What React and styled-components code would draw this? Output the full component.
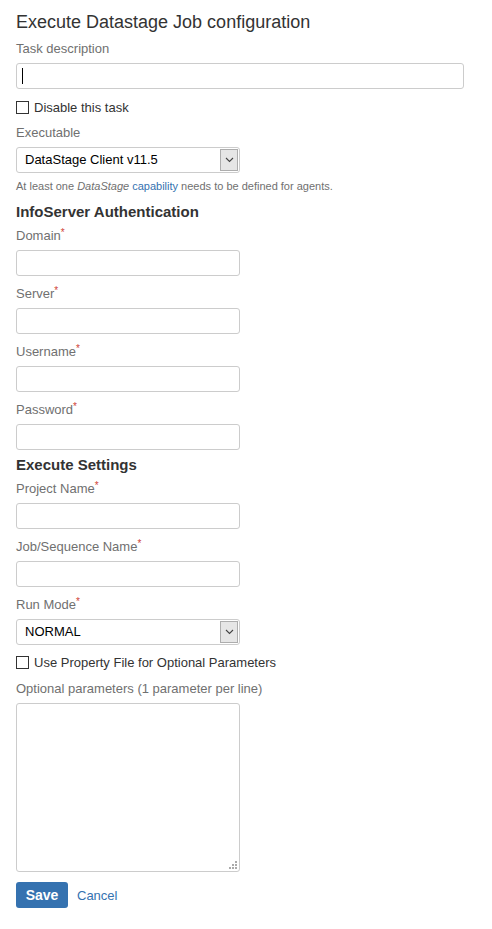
import React from "react";
import styled, { createGlobalStyle } from "styled-components";

const Global = createGlobalStyle`
  html, body { margin: 0; padding: 0; background: #fff; }
  body { font-family: "Liberation Sans", Arial, sans-serif; color: #333; }
  * { box-sizing: border-box; }
`;

const Page = styled.form`
  padding: 10px 16px 20px 16px;
  display: flex;
  flex-direction: column;
  width: 492px;
`;

const Title = styled.h2`
  margin: 0;
  font-size: 18px;
  font-weight: normal;
  line-height: 24px;
  color: #333;
`;

const SectionTitle = styled.h3`
  margin: ${(p) => p.$mt || 0}px 0 0 0;
  font-size: 15px;
  font-weight: bold;
  line-height: 20px;
  color: #333;
`;

const Field = styled.div`
  display: flex;
  flex-direction: column;
  gap: 4px;
  margin-top: ${(p) => p.$mt || 0}px;
`;

const Label = styled.label`
  font-size: 13px;
  line-height: 20px;
  color: #707070;
`;

const Req = styled.span`
  color: #d04437;
  font-size: 10px;
  vertical-align: top;
  line-height: 14px;
`;

const InputWrap = styled.div`
  position: relative;
  width: ${(p) => (p.$wide ? "448px" : "224px")};
`;

const TextInput = styled.input`
  display: block;
  width: 100%;
  height: 26px;
  border: 1px solid #ccc;
  border-radius: 3px;
  padding: 3px 6px;
  font-family: inherit;
  font-size: 13px;
  color: #333;
  outline: none;
  background: #fff;
`;

const Caret = styled.span`
  position: absolute;
  left: 6px;
  top: 5px;
  width: 1px;
  height: 16px;
  background: #000;
`;

const SelectBox = styled.div`
  width: 224px;
  height: 26px;
  border: 1px solid #ccc;
  border-radius: 3px;
  display: flex;
  align-items: stretch;
  background: #fff;
`;

const SelectValue = styled.div`
  flex: 1;
  padding-left: 8px;
  font-size: 13px;
  line-height: 24px;
  color: #000;
`;

const SelectArrow = styled.div`
  width: 18px;
  margin: 1px 1px 1px 0;
  background: #e6e6e6;
  border: 1px solid #adadad;
  display: flex;
  align-items: center;
  justify-content: center;
`;

const CheckRow = styled.label`
  display: flex;
  align-items: center;
  gap: 5px;
  height: 20px;
  margin-top: ${(p) => p.$mt || 0}px;
  font-size: 13px;
  color: #333;
`;

const Box = styled.span`
  width: 13px;
  height: 13px;
  border: 1px solid #333;
  background: #fff;
  display: inline-block;
`;

const Hint = styled.div`
  margin-top: 6px;
  font-size: 11px;
  line-height: 14px;
  color: #707070;
  em { font-style: italic; }
  a { color: #3572b0; text-decoration: none; }
`;

const AreaWrap = styled.div`
  position: relative;
  width: 224px;
`;

const TextArea = styled.textarea`
  display: block;
  width: 224px;
  height: 169px;
  border: 1px solid #ccc;
  border-radius: 3px;
  resize: none;
  outline: none;
  font-family: inherit;
  font-size: 13px;
`;

const Grip = styled.svg`
  position: absolute;
  right: 3px;
  bottom: 3px;
`;

const Actions = styled.div`
  display: flex;
  align-items: center;
  gap: 9px;
  margin-top: 10px;
`;

const SaveButton = styled.button`
  width: 52px;
  height: 26px;
  border: none;
  border-radius: 3px;
  background: #3572b0;
  color: #fff;
  font-family: inherit;
  font-weight: bold;
  font-size: 14px;
  padding: 0;
`;

const CancelLink = styled.a`
  color: #3572b0;
  font-size: 13px;
  text-decoration: none;
`;

const Chevron = () => (
  <svg width="9" height="6" viewBox="0 0 9 6">
    <path d="M1 1 L4.5 4.5 L8 1" fill="none" stroke="#444" strokeWidth="1.1" />
  </svg>
);

const Select = ({ value }) => (
  <SelectBox>
    <SelectValue>{value}</SelectValue>
    <SelectArrow>
      <Chevron />
    </SelectArrow>
  </SelectBox>
);

const TextField = ({ label, required, mt }) => (
  <Field $mt={mt}>
    <Label>
      {label}
      {required && <Req>*</Req>}
    </Label>
    <InputWrap>
      <TextInput type="text" />
    </InputWrap>
  </Field>
);

export default function App() {
  return (
    <>
      <Global />
      <Page onSubmit={(e) => e.preventDefault()}>
        <Title>Execute Datastage Job configuration</Title>
        <Field $mt={5}>
          <Label>Task description</Label>
          <InputWrap $wide>
            <TextInput type="text" />
            <Caret />
          </InputWrap>
        </Field>
        <CheckRow $mt={8}>
          <Box />
          Disable this task
        </CheckRow>
        <Field $mt={6}>
          <Label>Executable</Label>
          <Select value="DataStage Client v11.5" />
        </Field>
        <Hint>
          At least one <em>DataStage</em> <a href="#">capability</a> needs to be defined for agents.
        </Hint>
        <SectionTitle $mt={9}>InfoServer Authentication</SectionTitle>
        <TextField label="Domain" required mt={4} />
        <TextField label="Server" required mt={8} />
        <TextField label="Username" required mt={8} />
        <TextField label="Password" required mt={8} />
        <SectionTitle $mt={5}>Execute Settings</SectionTitle>
        <TextField label="Project Name" required mt={4} />
        <TextField label="Job/Sequence Name" required mt={8} />
        <Field $mt={8}>
          <Label>
            Run Mode<Req>*</Req>
          </Label>
          <Select value="NORMAL" />
        </Field>
        <CheckRow $mt={7}>
          <Box />
          Use Property File for Optional Parameters
        </CheckRow>
        <Field $mt={7}>
          <Label>Optional parameters (1 parameter per line)</Label>
          <AreaWrap>
            <TextArea />
            <Grip width="8" height="8" viewBox="0 0 8 8">
              <rect x="6" y="0" width="2" height="2" fill="#aaa" />
              <rect x="3" y="3" width="2" height="2" fill="#aaa" />
              <rect x="6" y="3" width="2" height="2" fill="#aaa" />
              <rect x="0" y="6" width="2" height="2" fill="#aaa" />
              <rect x="3" y="6" width="2" height="2" fill="#aaa" />
              <rect x="6" y="6" width="2" height="2" fill="#aaa" />
            </Grip>
          </AreaWrap>
        </Field>
        <Actions>
          <SaveButton type="submit">Save</SaveButton>
          <CancelLink href="#">Cancel</CancelLink>
        </Actions>
      </Page>
    </>
  );
}
